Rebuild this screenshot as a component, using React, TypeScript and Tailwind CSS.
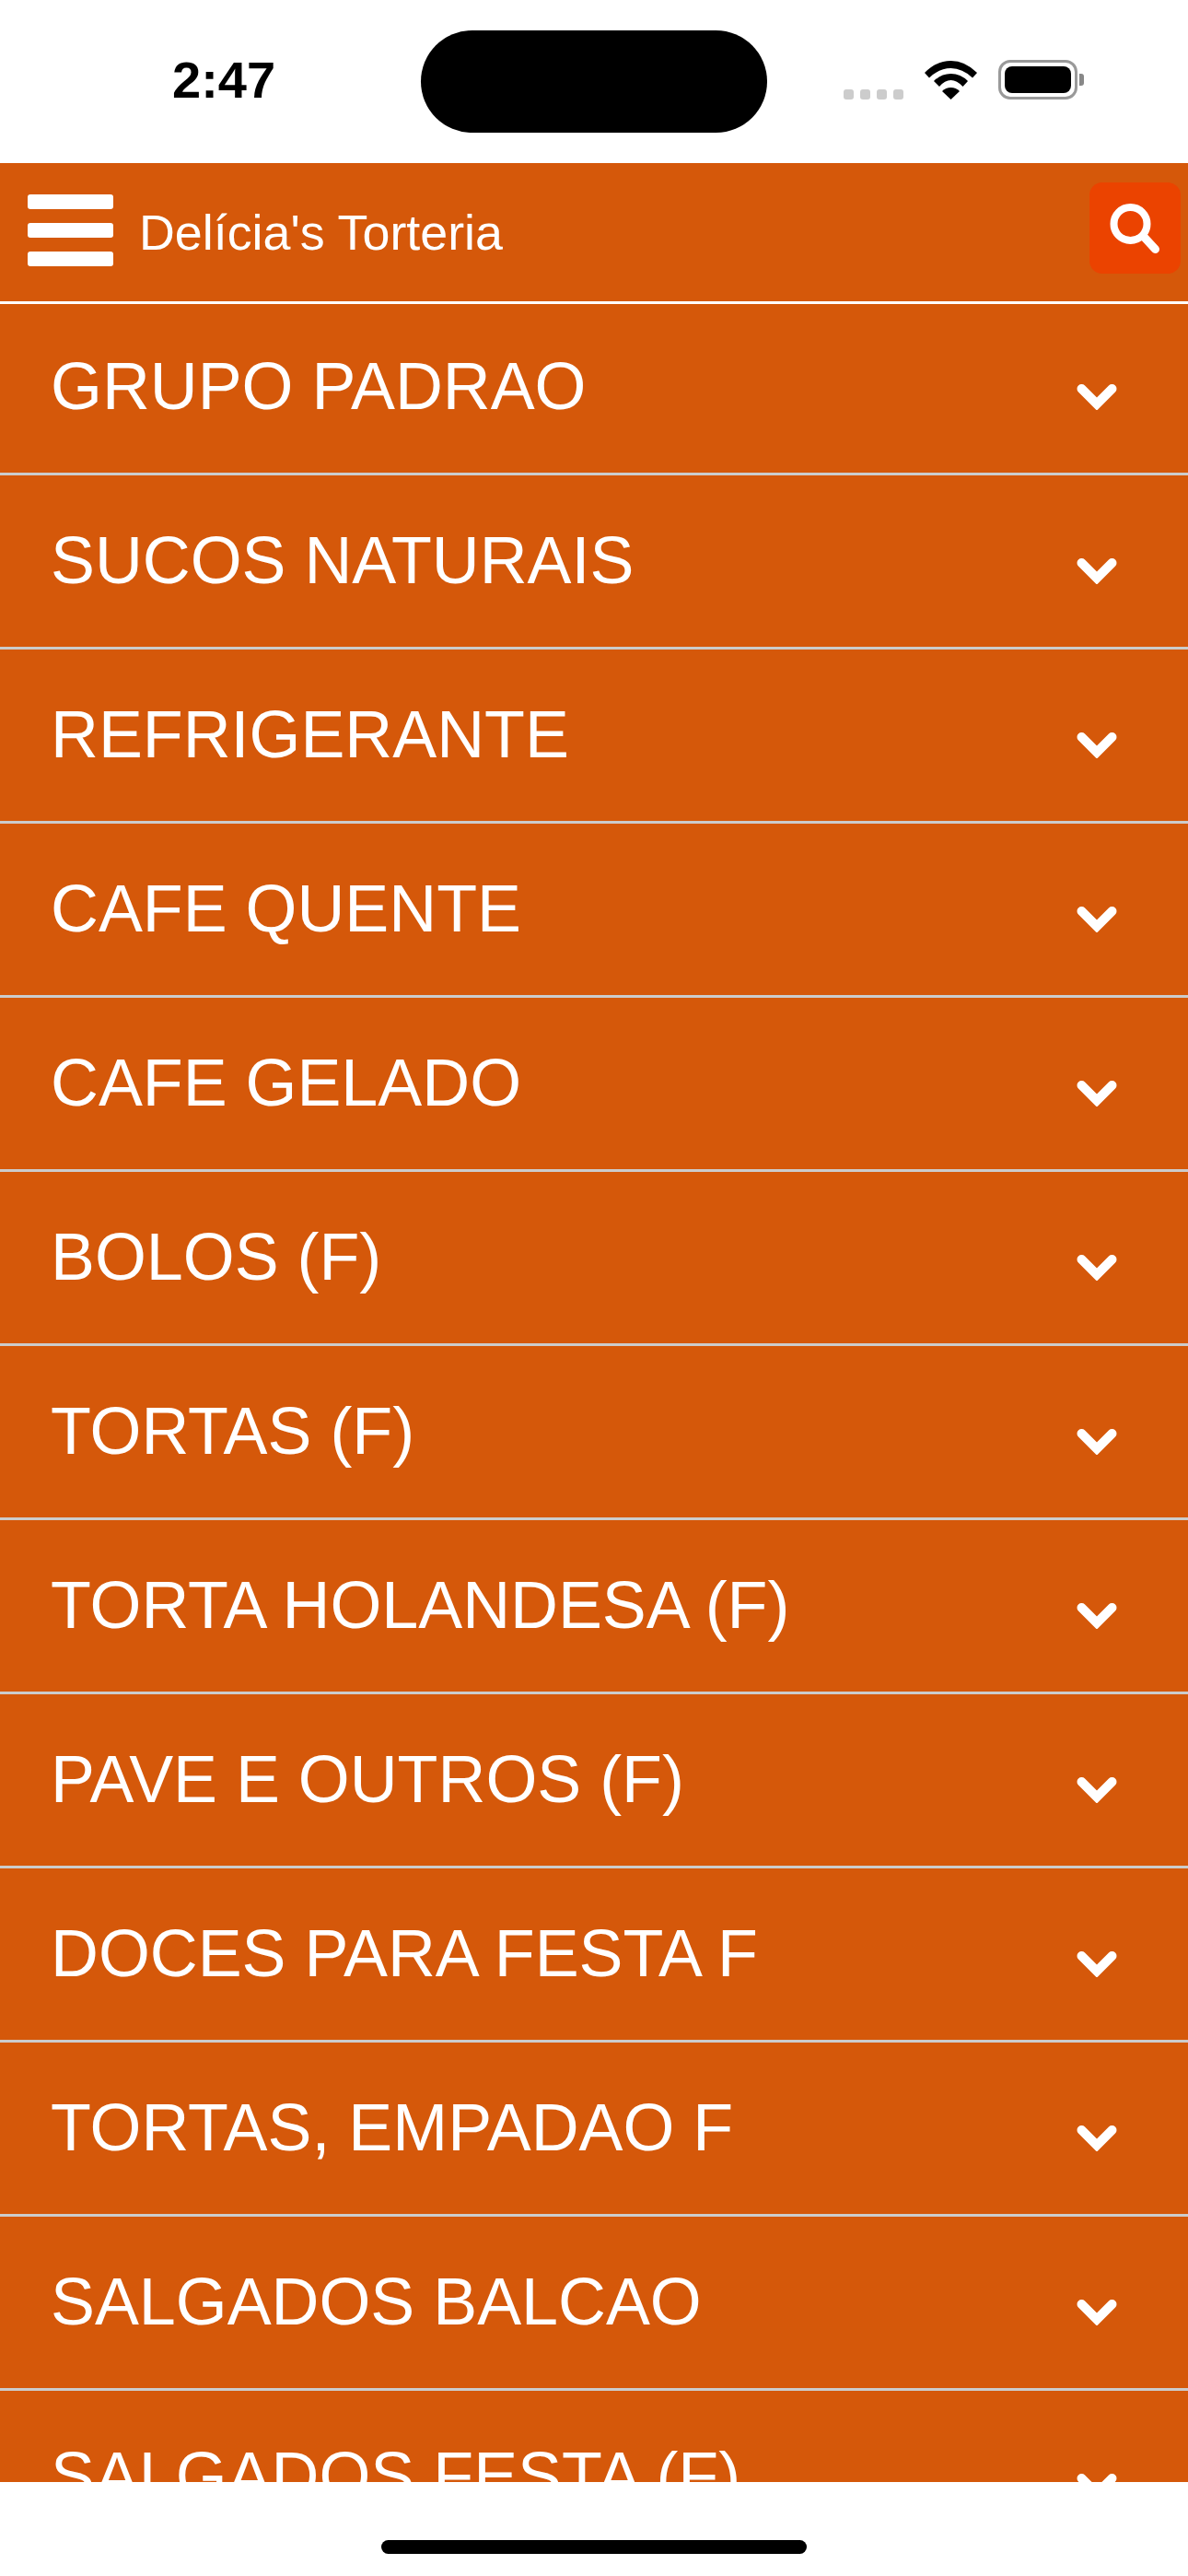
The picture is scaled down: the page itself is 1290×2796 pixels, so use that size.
import React from 'react';

const groups = [
  'GRUPO PADRAO',
  'SUCOS NATURAIS',
  'REFRIGERANTE',
  'CAFE QUENTE',
  'CAFE GELADO',
  'BOLOS (F)',
  'TORTAS (F)',
  'TORTA HOLANDESA (F)',
  'PAVE E OUTROS (F)',
  'DOCES PARA FESTA F',
  'TORTAS, EMPADAO F',
  'SALGADOS BALCAO',
  'SALGADOS FESTA (F)',
];

function StatusBar() {
  return (
    <div className="h-[177px] shrink-0 bg-white flex items-start relative">
      <span className="ml-[187px] mt-[56px] text-[56px] leading-[62px] font-bold text-black">2:47</span>
      {/* dynamic island */}
      <div className="absolute left-[457px] top-[33px] w-[376px] h-[111px] rounded-[56px] bg-black" />
      <div className="ml-auto mt-[65px] mr-[120px] flex items-end">
        <div className="flex gap-[7px] mr-[23px]">
          <span className="w-[11px] h-[11px] rounded-[3px] bg-[#cccccc]" />
          <span className="w-[11px] h-[11px] rounded-[3px] bg-[#cccccc]" />
          <span className="w-[11px] h-[11px] rounded-[3px] bg-[#cccccc]" />
          <span className="w-[11px] h-[11px] rounded-[3px] bg-[#cccccc]" />
        </div>
        <svg width="57" height="42" viewBox="0 0 57 42" className="mr-[23px]" fill="#000">
          <path d="M0 13Q13 0 28.5 0Q44 0 57 13L52 18.5Q41 8 28.5 8Q16 8 5 18.5Z" />
          <path d="M10 22Q18 14 28.5 14Q39 14 47 22L41.5 28Q35 21 28.5 21Q22 21 16 28Z" />
          <path d="M19 33Q23 29 28.5 29Q34 29 38 33L28.5 42Z" />
        </svg>
        <div className="relative w-[86px] h-[43px] rounded-[13px] border-[3px] border-[#999999] p-[4px]">
          <div className="w-full h-full rounded-[8px] bg-black" />
          <span className="absolute left-[85px] top-[12px] w-[5px] h-[13px] rounded-r-[3px] bg-[#888888]" />
        </div>
      </div>
    </div>
  );
}

function Header() {
  return (
    <div className="relative z-10 h-[153px] shrink-0 bg-[#d5580a] border-b-[3px] border-white flex items-center pl-[30px] pr-[8px]">
      <div className="w-[93px] mb-[5px] flex flex-col gap-[15px]">
        <span className="h-[16px] rounded-[3px] bg-white" />
        <span className="h-[16px] rounded-[3px] bg-white" />
        <span className="h-[16px] rounded-[3px] bg-white" />
      </div>
      <span className="ml-[28px] mb-[1px] text-[53.8px] leading-[60px] text-white">Delícia's Torteria</span>
      <button className="ml-auto mb-[9px] w-[99px] h-[99px] rounded-[14px] bg-[#eb4300] flex items-center justify-center">
        <svg width="55" height="54" viewBox="0 0 55 54" fill="none" stroke="#fff">
          <circle cx="22.5" cy="22" r="18" strokeWidth="8" />
          <path d="M38 37L49.5 49.5" strokeWidth="9" strokeLinecap="round" />
        </svg>
      </button>
    </div>
  );
}

function Row({ label }: { label: string }) {
  return (
    <div className="h-[189px] shrink-0 border-b-[3px] border-[#cccccc] flex items-center pl-[55px] pr-[77px]">
      <span className="mb-[2px] text-[71.85px] leading-[80px] text-white">{label}</span>
      <svg width="44" height="28" viewBox="0 0 44 28" className="ml-auto mt-[22px]" fill="none" stroke="#fff" strokeWidth="10" strokeLinecap="round">
        <path d="M5.5 5L22 21.5L38.5 5" />
      </svg>
    </div>
  );
}

export default function App() {
  return (
    <div className="w-[1290px] h-[2796px] flex flex-col bg-white overflow-hidden font-['Liberation_Sans',Arial,sans-serif]">
      <StatusBar />
      <Header />
      <div className="-mt-[3px] h-[2367px] shrink-0 bg-[#d5580a] overflow-hidden">
        {groups.map((g) => (
          <Row key={g} label={g} />
        ))}
      </div>
      <div className="flex-1 flex justify-center pt-[63px]">
        <span className="w-[462px] h-[15px] rounded-full bg-black" />
      </div>
    </div>
  );
}
